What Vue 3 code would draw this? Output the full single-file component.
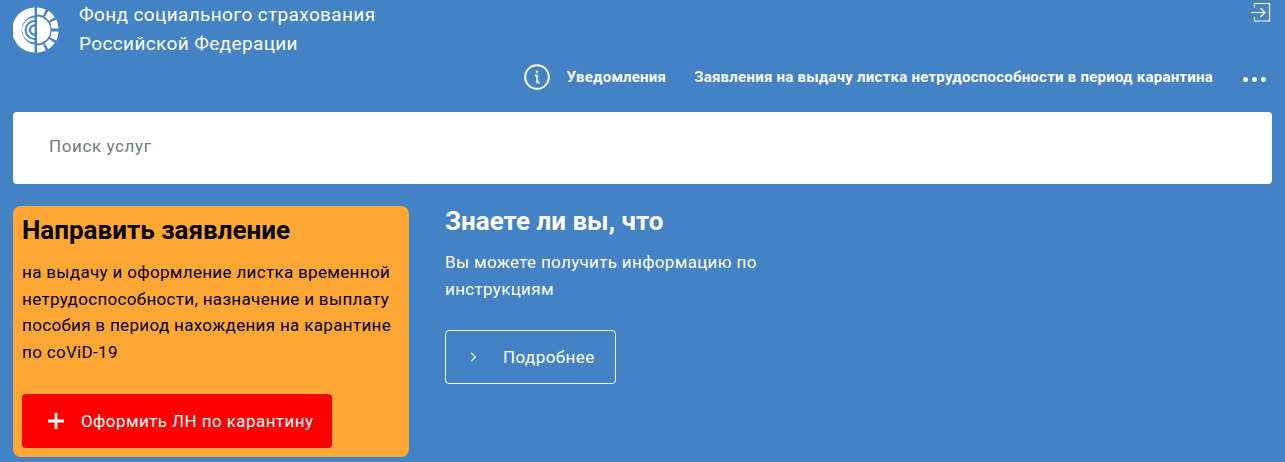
<template>
  <div class="page">
    <header class="top">
      <div class="brand">
        <svg class="logo" width="46" height="46" viewBox="0 0 46 46">
          <!-- левая половина -->
          <path d="M21.6 .5A22.5 22.5 0 0 0 21.6 45.5V37.5A14.6 14.6 0 0 1 21.6 8.5Z" fill="#fff" />
          <path d="M21.6 10.5A12.5 12.5 0 0 0 21.6 35.5V33A10 10 0 0 1 21.6 13Z" fill="#fff" />
          <path d="M21.6 15A8 8 0 0 0 21.6 31V28.8A5.8 5.8 0 0 1 21.6 17.2Z" fill="#fff" />
          <path d="M21.6 19.5A3.5 3.5 0 0 0 21.6 26.5Z" fill="#fff" />
          <!-- правая половина -->
          <path d="M24 9.5A13.5 13.5 0 0 1 24 36.5Z" fill="#fff" />
          <g fill="none" stroke="#fff" stroke-width="7">
            <path d="M24 4A19 19 0 0 1 31.5 5.6" />
            <path d="M33.5 6.8A19 19 0 0 1 39 12" />
            <path d="M40.2 14A19 19 0 0 1 42 21.5" />
            <path d="M42 24.5A19 19 0 0 1 40.2 32" />
            <path d="M39 34A19 19 0 0 1 33.5 39.2" />
            <path d="M31.5 40.4A19 19 0 0 1 24 42" />
          </g>
        </svg>
        <div class="brand-name">Фонд социального страхования<br />Российской Федерации</div>
      </div>
      <svg class="exit" width="20" height="20" viewBox="0 0 20 20" fill="none" stroke="#fff" stroke-width="1.2">
        <path d="M3.5 6V1.5H18.5V19H3.5V15" />
        <path d="M0 10.5H14M9.5 6L14 10.5L9.5 15" />
      </svg>
    </header>

    <nav class="menu">
      <svg class="info" width="26" height="26" viewBox="0 0 26 26" fill="none" stroke="#fff">
        <circle cx="13" cy="13" r="11.8" stroke-width="2" />
        <path d="M11 11.5H13.2V18.5H15.5" stroke-width="1.8" />
        <circle cx="13" cy="7.8" r="1.2" fill="#fff" stroke="none" />
      </svg>
      <a class="menu-link first">Уведомления</a>
      <a class="menu-link last">Заявления на выдачу листка нетрудоспособности в период карантина</a>
      <div class="dots"><span></span><span></span><span></span></div>
    </nav>

    <div class="search">Поиск услуг</div>

    <main class="content">
      <section class="card">
        <h2 class="card-title">Направить заявление</h2>
        <p class="card-text">на выдачу и оформление листка временной нетрудоспособности, назначение и выплату пособия в период нахождения на карантине по coViD-19</p>
        <button class="red-btn">
          <svg width="16" height="16" viewBox="0 0 16 16"><path d="M6.6 0H9.4V6.6H16V9.4H9.4V16H6.6V9.4H0V6.6H6.6Z" fill="#fff" /></svg>
          Оформить ЛН по карантину
        </button>
      </section>
      <section class="facts">
        <h2 class="facts-title">Знаете ли вы, что</h2>
        <p class="facts-text">Вы можете получить информацию по инструкциям</p>
        <button class="more-btn">
          <svg width="7" height="10" viewBox="0 0 7 10" fill="none" stroke="#fff" stroke-width="1.2"><path d="M1.2 .8L5.4 5L1.2 9.2" /></svg>
          Подробнее
        </button>
      </section>
    </main>
  </div>
</template>

<script setup>
</script>

<style>
html, body {
  margin: 0;
  background: #4282c5;
}
</style>

<style scoped>
.page {
  height: 462px;
  overflow: hidden;
  background: #4282c5;
  color: #fff;
  font-family: Roboto, "Noto Sans", sans-serif;
}

.top {
  display: flex;
  justify-content: space-between;
  height: 60px;
  padding: 0 14px 0 13px;
}
.brand {
  display: flex;
}
.logo {
  margin-top: 7px;
}
.brand-name {
  margin-left: 20px;
  font-size: 19px;
  line-height: 29px;
  letter-spacing: .37px;
}
.exit {
  margin-top: 2px;
}

.menu {
  display: flex;
  align-items: center;
  justify-content: flex-end;
  height: 34px;
  padding-right: 19px;
  font-size: 15px;
  font-weight: 700;
  letter-spacing: .24px;
}
.info {
  margin-right: 16px;
}
.menu-link {
  margin-right: 28px;
}
.menu-link.last {
  margin-right: 30px;
}
.dots {
  display: flex;
  gap: 4px;
  margin-top: 4px;
}
.dots span {
  width: 5px;
  height: 5px;
  border-radius: 50%;
  background: #fff;
}

.search {
  display: flex;
  align-items: center;
  height: 68px;
  margin: 18px 13px 0;
  padding: 0 0 4px 36px;
  background: #fff;
  border-radius: 4px;
  color: #6f7b85;
  font-size: 17px;
  letter-spacing: .6px;
}

.content {
  display: flex;
  margin: 22px 0 0 13px;
}
.card {
  box-sizing: border-box;
  width: 396px;
  height: 251px;
  padding: 9px;
  background: #ffa735;
  border-radius: 8px;
  color: #000;
}
.card-title {
  margin: 0;
  font-size: 26px;
  line-height: 30px;
  font-weight: 700;
}
.card-text {
  margin: 14px 0 0;
  font-size: 17px;
  line-height: 26.5px;
  letter-spacing: .33px;
}
.red-btn {
  display: flex;
  align-items: center;
  gap: 17px;
  width: 310px;
  height: 54px;
  margin-top: 29px;
  padding: 0 0 0 26px;
  border: 0;
  border-radius: 4px;
  background: #ff0000;
  color: #fff;
  font: 400 17px Roboto, sans-serif;
  letter-spacing: .42px;
}

.facts {
  width: 340px;
  margin-left: 36px;
}
.facts-title {
  margin: 0;
  font-size: 26px;
  line-height: 30px;
  font-weight: 700;
}
.facts-text {
  margin: 13px 0 0;
  font-size: 17px;
  line-height: 27px;
  letter-spacing: .33px;
}
.more-btn {
  display: flex;
  align-items: center;
  gap: 26px;
  width: 171px;
  height: 54px;
  margin-top: 27px;
  padding: 0 0 0 24px;
  border: 1px solid #fff;
  border-radius: 4px;
  background: transparent;
  color: #fff;
  font: 400 17px Roboto, sans-serif;
  letter-spacing: .42px;
}
</style>
